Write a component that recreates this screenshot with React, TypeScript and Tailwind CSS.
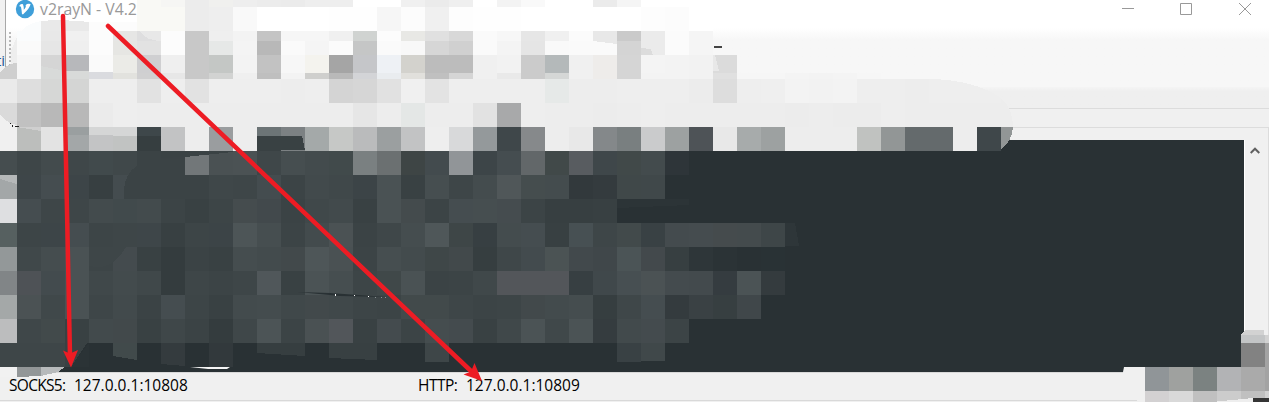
const CELL = 24;

// Each row holds space-separated hex fills, starting at column 0 (x = -7). "-" leaves a cell clear.
const rows: { y: number; h: number; cells: string }[] = [
  { y: 0, h: 7, cells: '- - - - - - f9f9f5 f6f6f4 ececec f0f0ee eeeeee ececec ebebeb eeeeee eeeeee ffffff ffffff f0f0f0 ebebeb efefef ffffff f3f3f3 f9f9f9 ffffff ffffff ebebeb f5f5f5 ffffff ffffff' },
  { y: 7, h: 24, cells: '- - - - - - f9f9f5 f9f9f5 ececec eeeeee f9f9f9 ffffff ffffff ffffff fefefe fefefe f6f6f6 fcfcfc f0f0f0 fdfdfd fefefe fefefe ffffff ffffff ffffff ffffff ffffff fdfdfd fcfcfc' },
  { y: 31, h: 24, cells: '- fafcfd e8e8e8 f0f0f0 fcfcfc e6e6e5 dededf fcfcfc c8c8c8 efefef f3f3f3 c4c4c4 f6f6f6 f6f6f6 f0f0f0 d0d3d1 fcfcfc e8e8e5 e0e0e0 d8d8d8 fafafa f7f7f7 e6e6e6 f0f0f0 fbfbfb e8e8e8 cacaca ebebeb fbfbfb f5f5f5' },
  { y: 41, h: 14, cells: '- fafafa e6e6e6 efefef fcfcfc e6e6e3 e2e2e2 fcfcfc c8c8c8 e6e8e7 f4f4f4 b8b8b8 fafafa f5f5f5 fbfbfb c5c6c6 fafafa f8f8f8 d6d6d6 d0d0d0 fafafa f4f4f4 e5e5e5 f9f9f9 fafafa f9f9f9 d4d4d4 ebebeb fbfbfb f5f5f5' },
  { y: 55, h: 24, cells: '- f6f6f6 d5d5d5 b7b8bb fafafa ebebe7 cfcfd1 efefef c8c8c8 c4c7c5 f3f3f3 c2c2c2 f7f7f7 f4f3ee a5a5a5 c5c6c9 eef1f5 d3d2cd bcbcbc bcbcbc f0f0f0 f2f2f2 cbcbcb b4b9ba f0f0f0 eeecea d5d5d5 f4f4f4 f3f3f3 f2f2f2 dbdbdb' },
  { y: 73, h: 6, cells: 'd0d0d0 f6f6f6 d6d6d6 d6d6d6 dadbde e2e2de d0d0d1 e7e7e7 c8c8c8 d2d3d2 efefef bfbfbf f3f3f3 cfcfcd b9b9b9 d3d4d7 e9ecef e1e0dc c0c0c0 d5d5d5 f0f0f0 e9e9e9 cbcbcb d5d7d6 f0f0f0 eeecea d5d5d5 f3f3f3 f3f3f3 f2f2f2 e0e0e0 f6f6f6 f6f6f6 f4f4f4 f3f3f3 f4f4f4 f6f6f6' },
  { y: 79, h: 24, cells: 'eaeaea dedede d6d7d6 d4d5d4 eeeeee eeeeee e2e2e2 eeeeee e2e2e2 eeeeee eeeeee eeeeee ededed eeeeee d4d4d4 d6d6d6 e1e1e1 f0f0f0 e3e3e3 eeeeee eeeeee eeeeee eeeeee e6e9e8 ededed ededed eeeeee eeeeee eeeeee ececec dddddd eeeeee efefef f3f3f3 f2f2f2 f3f3f3 eeeeee eeeeee ededed' },
  { y: 103, h: 24, cells: 'dadada c1c1c1 b8b8b8 b8b8b8 ebebeb eeeeee ededed ededed ededed ededed ededed ededed ededed ededed ededed e6e6e6 ededed e4e7e6 ededed ededed e2e2e2 a8a9aa eeeeee ededed ededed ececec ededed eeeeee ededed ededed ededed ededed ededed ececec ededed ececec ececec eeeeee ededed ededed ededed ededed' },
  { y: 127, h: 24, cells: 'f0f0f0 bcbebc e3e3e3 a3a7a8 c3c4c5 c1c3c2 363e40 c2c3c4 ededed 9a9d9f ededed 6c7476 7c8183 a4a9a9 c6c8c6 babbbc 9b9fa0 c2c3c4 eeeeee d8d9da 94999b 3f474a 86898b ededed e8e8e8 84888a 797f80 cacbcc 9da1a1 4e5357 e8e8e8 a7abab 9da1a1 ededed ededed ededed c0c2c0 929696 646a6c 646a6c ededed 3f474a' },
  { y: 151, h: 24, cells: '454d4f 3e4648 434b4d 3f4749 414a4c 40484a 3b4345 3b4245 727779 4a5153 4b5254 3f4749 464e50 434b4d 414a4b 7a8081 6b7071 3e4545 434b4e 919598 3d4548 454d50 626769 414949 585c60 3f474a 414949 434b4d 2e3539' },
  { y: 175, h: 24, cells: 'a3a7a8 3e4649 454d50 3d4548 373f41 444c4f 3d4547 454d4f 3b4345 3f4749 3e4648 444c4f 3c4446 424a4c 40484a 3c4447 4a5254 394143 464e50 3e4648 444c4e 505759 454d4e 444c4e 32393c 343b3e 404849 40484a' },
  { y: 199, h: 24, cells: 'dedfe1 454d50 3e4648 3e4648 434b4d 414a4c 434b4d 3c4446 394143 3d4547 454c4e 42494c 3b4345 40484a 424a4c 394143 4a5254 444b4d 3c4446 454d50 464e50 454c4f 3c4446 373f41 373f41 384042' },
  { y: 223, h: 24, cells: '566060 3d4547 3d4548 454d50 3d4547 3e4648 3e4649 384042 3d4547 3c4447 4d5557 464e50 3c4446 434b4d 4b5254 3b4345 3f4749 454d4f 4f5759 3e4647 373f42 444c4e 454d50 384042 475053 3e4648 424a4b 394144 444b4e 454c4f 454b4d 444b4d 3e4648' },
  { y: 247, h: 24, cells: '939899 40484a 454d4f 4a5254 3d4547 444b4e 394143 343c3e 3b4345 394143 454d4f 434b4d 42494b 4e5658 4a5153 3c4446 464e50 434b4d 3f4748 42494b 363e40 3f4749 434b4e 4b5354 42494c 40474a 4b5456 43494c 373f41 2e3639 2b3336 293134 293235' },
  { y: 271, h: 24, cells: '818587 4e5256 434b4e 4a5254 40484a 434b4d 40484a 343c3e 3e4648 3c4446 3e4648 50575a 394143 4b5355 464e50 3d4547 404849 4a5254 3b4345 3c4446 40484a 53565a 53565a 53565a 373f42 40484b 474f52 4b5254 444b4e 434a4d 353c40 4b5355 343b3e' },
  { y: 295, h: 24, cells: 'a4a8a8 4b5254 40484a 4a5254 3e4648 424a4c 3b4345 454d50 3d4547 394143 434b4d 444c4e 40484a 42494b 40484a 3d4547 3c4446 424a4b 424a4b 3e4648 3c4446 3d4547 42494b 434b4d 454d4f 363e40 3f4749 454d50 343b3e 3a4144 373f41 40474a' },
  { y: 319, h: 24, cells: 'bcbdbe 3f4749 424a4b 394143 424a4c 42494b 394143 3f4749 3b4345 343c3e 3f4749 4c5456 3c4446 4a5153 52565a 394143 444b4e 3c4446 454d4f 444b4e 394143 40484a 4b5355 40484a 4b5355 353c3f 424a4c 444b4e 3c4446' },
  { y: 343, h: 24, cells: '3e4648 3e4648 3e4648 2b3336' },
];

function Mosaic() {
  return (
    <svg className="absolute inset-0 pointer-events-none" width="1269" height="402" shapeRendering="crispEdges">
      <path d="M137 79H930Q975 80 1001 98V127H17L0 115V79Z" fill="#eeeeee" />
      <path d="M0 127H990V151H0Z" fill="#eeeeee" />
      {rows.map((row) =>
        row.cells.split(' ').map((color, i) =>
          color === '-' ? null : (
            <rect key={`${row.y}-${i}`} x={i * CELL - 7} y={row.y} width={CELL} height={row.h} fill={`#${color}`} />
          ),
        ),
      )}
      <path d="M697 0H713V31H689V7H705Z" fill="#ffffff" />
      <path d="M17 37Q24 24 41 21V31H17Z" fill="#fafcfd" />
      <path d="M41 21Q60 19 89 22V31H41Z" fill="#e9e9e9" />
      <path d="M89 22H137V31H89Z" fill="#fcfcfc" />
      <path d="M137 31H161V41Q147 41 139 31Z" fill="#e8e8e8" />
      <path d="M11 66V50L17 37V66Z" fill="#eeeeee" />
      <path d="M0 72Q8 63 17 63V79H0Z" fill="#cfcfcf" />
      <path d="M41 66L65 71L113 72V79H41Z" fill="#d8dad9" />
      <path d="M89 72H113V79H89Z" fill="#dadbdf" />
      <path d="M0 115Q8 124 17 125V127H0Z" fill="#f0f0f0" />
      <path d="M17 127H41V131Z" fill="#cfcfcf" />
      <path d="M89 127H137V136L89 135Z" fill="#d5d6d6" />
      <path d="M65 127H89V135H65Z" fill="#9a9fa0" />
      <path d="M137 127H161V136H137Z" fill="#3e474a" />
      <path d="M257 136H302L305 150L257 151Z" fill="#394143" />
      <path d="M1001 127H1013Q1012 142 1001 149Z" fill="#929696" />
      <path d="M1001 98Q1013 109 1013 127H1001Z" fill="#ededed" />
      <path d="M593 41L617 44V55H593Z" fill="#fafafa" />
      <path d="M593 41L617 44V41Z" fill="#e8e8e8" />
      <path d="M641 48L651 49L653 55H641Z" fill="#dcdcdc" />
      <path d="M715 55L719 71H713V55Z" fill="#e8e8e8" />
      <path d="M185 157L233 152V151H161V158Z" fill="#3a4244" />
      <path d="M0 179L17 184V175H0Z" fill="#b5b8b9" />
      <path d="M124 199Q121 161 161 159H185V199Z" fill="#3b4345" />
      <path d="M89 247H126Q114 268 97 267L89 266Z" fill="#3e4648" />
      <path d="M617 199H689V205L617 208Z" fill="#2c3437" />
      <path d="M785 223H795L799 246H785Z" fill="#2e3639" />
      <path d="M65 343H87L71 367H65Z" fill="#394143" />
      <path d="M87 343H89L71 367Z" fill="#293134" />
      <path d="M113 343H137V360L113 356Z" fill="#414a4b" />
      <path d="M161 343H185V366L161 364Z" fill="#343b3e" />
      <path d="M209 343H233V367H209Z" fill="#32393c" />
      <path d="M257 343H305V356L257 353Z" fill="#363e40" />
      <path d="M329 343H377V360L329 358Z" fill="#384042" />
      <path d="M425 343H449V362H425Z" fill="#3e4648" />
      <path d="M617 343H641V362H617Z" fill="#394144" />
      <path d="M641 343H665V361H641Z" fill="#40484a" />
      <path d="M0 367H17V377H0Z" fill="#f1f1f1" />
      <path d="M17 367H41V376L17 377Z" fill="#929697" />
      <path d="M41 367H65L58 372L41 376Z" fill="#b7babb" />
      <path d="M190 367H230L227 369H208Z" fill="#f5f5f5" shapeRendering="auto" />
      <path d="M298 292L330 293L387 297L340 296Z" fill="#293134" shapeRendering="auto" />
      <path d="M335 294h1v2h-1zM354 295h1v1h-1zM368 296h1v1h-1z" fill="#fff" />
      <path d="M375 297h1v1h-1zM381 297h1v1h-1zM385 297h1v1h-1z" fill="#899092" />
      <path d="M10 123h1v1h-1zM12 125h1v2h-1zM15 126h4v1h-4z" fill="#202020" />
      <path d="M1145 367H1241V335L1245 330H1264V335H1269V402H1145Z" fill="#d2d2d2" />
      <path d="M1241 335H1265V343H1241Z" fill="#c3c5c6" />
      <path d="M1241 343H1265V367H1241Z" fill="#828282" />
      <path d="M1145 367H1169V391H1145Z" fill="#909598" />
      <path d="M1169 367H1193V391H1169Z" fill="#9fa19f" />
      <path d="M1193 367H1217V391H1193Z" fill="#7b8281" />
      <path d="M1217 367H1241V391H1217Z" fill="#b2b3b5" />
      <path d="M1241 367H1265V391H1241Z" fill="#aaaaaa" />
      <path d="M1265 343H1269V391H1265Z" fill="#a3a3a3" />
      <path d="M1145 391H1169V402H1145Z" fill="#d3d1d2" />
      <path d="M1169 391H1193V402H1169Z" fill="#d9d9d9" />
      <path d="M1193 391H1217V402H1193Z" fill="#c0c0c0" />
      <path d="M1217 391H1241V402H1217Z" fill="#cccccc" />
      <path d="M1241 391H1265V402H1241Z" fill="#c0c0c0" />
      <path d="M1212 402L1253 398V402Z" fill="#eeeeee" />
      <path d="M1253 398H1269V402H1253Z" fill="#353535" />
    </svg>
  );
}

function Arrows() {
  return (
    <svg className="absolute inset-0 pointer-events-none" width="1269" height="402" fill="#ed1c24" stroke="#ed1c24">
      <path d="M63 16L70 356" strokeWidth="4.5" strokeLinecap="round" />
      <path d="M108 26L472 372" strokeWidth="4.5" strokeLinecap="round" />
      <path d="M71 367.5L63 350.5L70 353.5L78 350Z" stroke="none" />
      <path d="M482 381L474.500 363L471 371.500L463.500 374.500Z" stroke="none" />
    </svg>
  );
}

function TitleBar() {
  return (
    <header className="flex h-[28px] shrink-0 items-start bg-white text-[#999999]">
      <svg className="mt-[-1px] ml-[9px] shrink-0" width="20" height="20" viewBox="0 0 20 20">
        <circle cx="10" cy="10" r="9.2" fill="#3f9fd9" />
        <path d="M4.5 6.3Q6.4 4.6 8 5.3Q8.8 7.2 8.8 10.8Q11.5 7.8 10.6 6.2Q12.5 4 15.6 5.1Q14.8 9.5 8.2 15.2H7Q6.6 10.5 5.9 7.5L4.8 7.8Z" fill="#fff" />
      </svg>
      <h1 className="mt-[-1px] ml-[5px] w-[99px] font-['Open_Sans','Noto_Sans',sans-serif] text-[15.8px] leading-[20px] whitespace-nowrap">v2rayN - V4.2</h1>
      <svg className="ml-auto shrink-0" width="147" height="20" viewBox="0 0 147 20" fill="none" stroke="#999999">
        <path d="M0 8.5H12M58.5 3.5H69.5V14.5H58.5ZM117 3L129 15M129 3L117 15" />
      </svg>
    </header>
  );
}

function StatusBar() {
  return (
    <footer className="flex h-[30px] shrink-0 border-t border-[#d9d9d9] bg-[#f0f0f0] pl-[9px] font-['Open_Sans','Noto_Sans',sans-serif] text-[15.5px] leading-[25px] text-black whitespace-nowrap">
      <div className="flex w-[409px]">
        <span className="w-[65px] tracking-[-0.7px]">SOCKS5:</span>
        <span>127.0.0.1:10808</span>
      </div>
      <div className="flex">
        <span className="w-[48px] tracking-[-0.5px]">HTTP:</span>
        <span>127.0.0.1:10809</span>
      </div>
    </footer>
  );
}

export default function App() {
  return (
    <div className="relative flex h-[402px] w-[1269px] flex-col overflow-hidden bg-[#f0f0f0]">
      <div className="flex h-[108px] shrink-0">
        <aside className="flex w-[6px] shrink-0 items-start border-r border-[#a8a8a8] bg-[#f1f1f1] pt-[50px] font-['Open_Sans',sans-serif] text-[15px] leading-[20px] text-[#245a94]">
          <span className="ml-[-4px]">ti</span>
        </aside>
        <div className="flex min-w-0 flex-1 flex-col">
          <TitleBar />
          <div className="flex h-[59px] shrink-0 bg-linear-to-b from-white via-[#f7f7f7] via-20% to-[#f7f7f7]">
            <svg className="mt-[4px] ml-[3px] shrink-0" width="2" height="35" viewBox="0 0 2 35">
              <path d="M1 0V35" stroke="#b8b8b8" strokeWidth="2" strokeDasharray="2 2" />
            </svg>
            <span className="mt-[18px] ml-[703px] h-[2px] w-[8px] bg-[#444444]" />
          </div>
          <div className="h-[21px] bg-linear-to-b from-[#f5f5f5] to-[#efefef] to-20%" />
        </div>
      </div>
      <div className="h-[19px] shrink-0 border-t border-[#dcdcdc]" />
      <main className="flex h-[245px] shrink-0 border-t border-r border-[#dcdcdc] pt-[12px]">
        <div className="w-[1244px] shrink-0 bg-[#293134]" />
        <div className="flex flex-1 justify-center border-l border-white bg-[#f0f0f0] pt-[7px]">
          <svg className="mr-[3px]" width="10" height="7" viewBox="0 0 10 7">
            <path d="M.7 6L5 1.7L9.3 6" fill="none" stroke="#606060" strokeWidth="2" />
          </svg>
        </div>
      </main>
      <StatusBar />
      <svg className="absolute top-[367px] left-[1123px]" width="22" height="10">
        <path d="M0 5L1 0H22V10H0Z" fill="#f0f0f0" />
      </svg>
      <svg className="absolute top-[400px] left-0" width="1137" height="2">
        <path d="M0 .5H1137" stroke="#d9d9d9" />
      </svg>
      <Mosaic />
      <Arrows />
    </div>
  );
}
